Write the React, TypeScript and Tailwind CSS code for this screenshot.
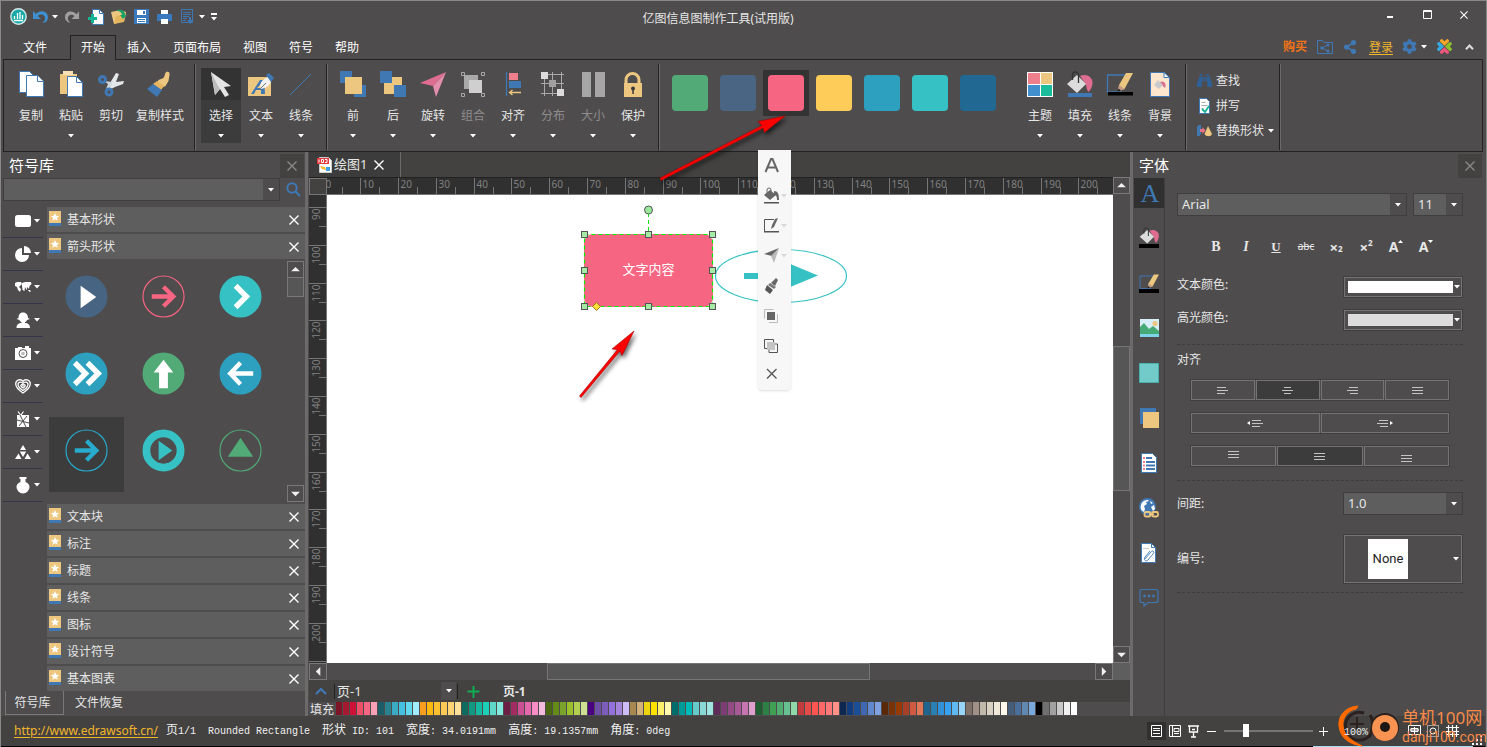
import React from "react";
import { FaBinoculars, FaCog, FaShareAlt } from "react-icons/fa";

const UI_FONT = "font-['Noto_Sans','Noto_Sans_CJK_SC',sans-serif]";

/* ---------- shared pieces ---------- */

function Caret({ className = "text-white" }: { className?: string }) {
  return (
    <svg width="6" height="4" viewBox="0 0 6 4" className={`shrink-0 ${className}`} aria-hidden="true">
      <path d="M0 0h6L3 3.5z" fill="currentColor" />
    </svg>
  );
}

function Cross({ size = 10 }: { size?: number }) {
  return (
    <svg width={size} height={size} viewBox="0 0 10 10" aria-hidden="true">
      <path d="M0.5 0.5l9 9M9.5 0.5l-9 9" stroke="currentColor" strokeWidth="1.4" fill="none" />
    </svg>
  );
}

function Divider() {
  return <div className="mt-1 mr-[5px] ml-[5px] h-[86px] w-0.5 shrink-0 border-r border-l border-r-[#6b696a] border-l-[#222]" />;
}

function Combo({ label, value, className, caretWidth = "w-4" }: { label: string; value: string; className: string; caretWidth?: string }) {
  return (
    <div className={`flex h-[23px] border border-[#403e3f] bg-[#5e5e5e] ${className}`}>
      <div className="relative flex-1">
        <select aria-label={label} className="h-full w-full appearance-none bg-transparent pl-1 text-[13px] text-[#e6e6e6] outline-none">
          <option>{value}</option>
        </select>
      </div>
      <span className={`flex items-center justify-center bg-[#4e4c4d] ${caretWidth}`}>
        <Caret />
      </span>
    </div>
  );
}

/* ---------- ribbon icons ---------- */

const BLUE = "#3f78b3";
const SAND = "#edc77f";

const bucket = (
  <>
    <path d="M14 5c6-3 13 1 12.500 7 0 4-2 7-4 9-2-2-2-6-3-8z" fill="#de6d90" />
    <path d="M11 4L20 13 11 22 1 13z" fill="#dcdcdc" />
    <path d="M6.500 9V4a3 3 0 0 1 6 0v8" fill="none" stroke="#333" strokeWidth="1.300" />
  </>
);

const pencilBox = (
  <>
    <path d="M20 4H1.500v17H16" fill="none" stroke={BLUE} strokeWidth="1.300" />
    <path d="M20 2h7L18.500 18 12 20.500 13 14z" fill={SAND} />
    <path d="M13 14l5.500 4L12 20.500z" fill="#c39a86" />
    <path d="M12.500 17.500l2.500 2-3.500 1.500z" fill="#222" />
  </>
);

const icons: Record<string, React.ReactNode> = {
  copy: (
    <g fill="#fff" stroke={BLUE}>
      <path d="M2.500.500h10l6 6v15h-16z" />
      <path d="M9.500 4.500h11l6 6v15h-17z" />
      <path d="M20.500 4.500v6h6" />
    </g>
  ),
  paste: (
    <>
      <path d="M3 3h17v20H3z" fill={SAND} />
      <path d="M6 0h10v4H6z" fill="#fbdfb5" />
      <path d="M10.500 5.500h9l6 6v14h-15z" fill="#fff" stroke={BLUE} />
      <path d="M19.500 5.500v6h6" fill="none" stroke={BLUE} />
    </>
  ),
  cut: (
    <>
      <path d="M13 12L19 2l3 1-3 8 8-1-1 3-8 3-4 2-3-3z" fill="#e4e7ea" />
      <path d="M7 10l8 1-1 4-3 4-2-1 2-5z" fill="#cfd6dc" />
      <g fill="none" stroke={BLUE} strokeWidth="3">
        <circle cx="5.500" cy="8.500" r="3" />
        <circle cx="12" cy="21" r="3" />
      </g>
    </>
  ),
  brush: (
    <>
      <path d="M20 1c3-1 4 1 3.500 3l-1 6-3 5-2 1-6-5 1-2 5-2c1-1 1-4 2.500-6z" fill={SAND} />
      <path d="M11 10l7 5-3 4-8-6z" fill="#e7b660" />
      <path d="M7 13l9 6-5 7L1 18z" fill={BLUE} />
    </>
  ),
  select: (
    <>
      <path d="M4 1l20 14-7 1 5 8-4 2-5-8-5 6z" fill="#e4e4e4" />
      <path d="M4 1l4 23 5-6-3-5z" fill="#bdbdbd" />
    </>
  ),
  text: (
    <>
      <path d="M1 6h23v19H1z" fill={SAND} />
      <path d="M4 23L13 9h4l1 14h-4v-4h-5l-2 4zM10 17h4v-4z" fill={BLUE} fillRule="evenodd" />
      <path d="M13 14c1-4 4-6 8-8l3 5c-2 4-5 6-10 7z" fill="#f2f2f2" />
      <path d="M12 19l7-7" stroke="#777" />
      <path d="M19 4l3-2 5 5-3 4z" fill={BLUE} />
    </>
  ),
  line: <path d="M3 24L24 3" stroke={BLUE} strokeWidth="1" />,
  front: (
    <>
      <path d="M1 0h12v12H1zM15 14h12v12H15z" fill={BLUE} />
      <path d="M6 6h17v17H6z" fill={SAND} />
    </>
  ),
  back: (
    <>
      <path d="M5 6h18v17H5z" fill={SAND} />
      <path d="M1 0h12v12H1zM15 14h12v12H15z" fill={BLUE} />
    </>
  ),
  rotate: (
    <>
      <path d="M27 1L1 12l13 3z" fill="#de6d90" />
      <path d="M27 1L14 15l3 11z" fill="#e58fae" />
    </>
  ),
  group: (
    <>
      <path d="M5 4h14v14H5z" fill="#a9a9a9" />
      <path d="M10 9h13v13H10z" fill="#cfcfcf" />
      <path d="M2.500 1.500h3v3h-3zM22.500 1.500h3v3h-3zM2.500 22.500h3v3h-3zM22.500 22.500h3v3h-3z" fill="none" stroke="#a9a9a9" />
    </>
  ),
  align: (
    <>
      <path d="M7.500 1v24" stroke={BLUE} strokeWidth="1.200" />
      <path d="M10 2h9v7h-9z" fill="#ee7f8c" />
      <path d="M10 10h12v7H10z" fill={BLUE} />
      <path d="M22 21.500H11M13.500 19l-3 2.500 3 2.500" stroke={SAND} fill="none" strokeWidth="1.300" />
    </>
  ),
  distribute: (
    <>
      <path d="M2 3.500h23M2 12.500h23M2 22.500h23M5.500 1v24M13.500 1v24M22.500 1v24" stroke="#a9a9a9" />
      <path d="M2 1h7v7H2zM18 18h7v7h-7z" fill="#dcdcdc" />
      <path d="M10 9h7v7h-7z" fill="#a0a0a0" />
    </>
  ),
  size: <path d="M3 1h9v25H3zM16 1h10v25H16z" fill="#a6a6a6" />,
  lock: (
    <>
      <path d="M7 12V9a6.500 6.500 0 0 1 13 0v3" fill="none" stroke={SAND} strokeWidth="3" />
      <path d="M5 12h18v14H5z" fill={SAND} />
      <circle cx="14" cy="17.500" r="2" fill="#3b3a3a" />
      <path d="M13.300 18h1.500v5h-1.500z" fill="#3b3a3a" />
    </>
  ),
  theme: (
    <>
      <path d="M1 1h26v25H1z" fill="#fff" />
      <path d="M2 2h12v11H2z" fill="#ee7f8c" />
      <path d="M15 2h11v11H15z" fill={SAND} />
      <path d="M2 14h12v11H2z" fill="#428fcd" />
      <path d="M15 14h11v11H15z" fill="#1abc9c" />
    </>
  ),
  fill: (
    <>
      {bucket}
      <path d="M2 22h24v4H2z" fill={BLUE} />
    </>
  ),
  stroke: (
    <>
      {pencilBox}
      <path d="M2 21h25v3.500H2z" fill="#000" />
    </>
  ),
  background: (
    <>
      <path d="M4.500 1.500h14l5 5v19h-19z" fill="#fde6cd" stroke={BLUE} />
      <path d="M18 1.500v5h5.500z" fill="#fff" stroke={BLUE} />
      <path d="M14 11c4-2 7 2 5 6-2-2-3-3-5-3z" fill="#de6d90" />
      <path d="M12 9l5 5-4 4-5-4z" fill="#c9c9c9" />
    </>
  ),
};

function Icon({ name, size = 28 }: { name: string; size?: number }) {
  return (
    <svg width={size} height={size} viewBox="0 0 28 28" className="shrink-0" aria-hidden="true">
      {icons[name]}
    </svg>
  );
}

function RibbonButton({ icon, label, caret, wide, active, dim }: { icon: string; label: string; caret?: boolean; wide?: boolean; active?: boolean; dim?: boolean }) {
  return (
    <button className={`mt-2 flex h-[75px] shrink-0 flex-col items-center ${wide ? "w-[58px]" : "w-10"} ${active ? "bg-[#3c3c3c]" : ""}`}>
      <span className={`flex h-8 w-full items-start justify-center pt-[3px] ${active ? "bg-[#333]" : ""}`}>
        <Icon name={icon} />
      </span>
      <span className={`mt-2 text-xs leading-4 whitespace-nowrap ${dim ? "text-[#8e8c8d]" : "text-[#e6e6e6]"}`}>{label}</span>
      {caret && <span className="mt-[10px] flex"><Caret /></span>}
    </button>
  );
}

const arrangeButtons = [
  { icon: "front", label: "前" },
  { icon: "back", label: "后" },
  { icon: "rotate", label: "旋转" },
  { icon: "group", label: "组合", dim: true },
  { icon: "align", label: "对齐" },
  { icon: "distribute", label: "分布", dim: true },
  { icon: "size", label: "大小", dim: true },
  { icon: "lock", label: "保护" },
];

const styleSwatches = [
  { color: "bg-[#52ab76]", name: "绿色" },
  { color: "bg-[#4a6583]", name: "灰蓝" },
  { color: "bg-[#f66581]", name: "粉红", active: true },
  { color: "bg-[#fecc59]", name: "黄色" },
  { color: "bg-[#2ca0be]", name: "蓝色" },
  { color: "bg-[#36c2c4]", name: "青色" },
  { color: "bg-[#216892]", name: "深蓝" },
];

function Ribbon() {
  return (
    <section className="mr-0.5 ml-0.5 flex h-[93px] overflow-hidden border border-[#222] pl-[7px]">
      <RibbonButton icon="copy" label="复制" />
      <RibbonButton icon="paste" label="粘贴" caret />
      <RibbonButton icon="cut" label="剪切" />
      <RibbonButton icon="brush" label="复制样式" wide />
      <Divider />
      <RibbonButton icon="select" label="选择" caret active />
      <RibbonButton icon="text" label="文本" caret />
      <RibbonButton icon="line" label="线条" caret />
      <Divider />
      {arrangeButtons.map((b) => (
        <RibbonButton key={b.label} caret {...b} />
      ))}
      <Divider />
      <div className="mt-2.5 mr-[19px] ml-0.5 flex shrink-0 gap-0.5">
        {styleSwatches.map((s) => (
          <button key={s.name} aria-label={s.name} className={`flex size-[46px] items-center justify-center ${s.active ? "bg-[#333]" : ""}`}>
            <span className={`size-9 rounded-[4px] ${s.color}`} />
          </button>
        ))}
      </div>
      <RibbonButton icon="theme" label="主题" caret />
      <RibbonButton icon="fill" label="填充" caret />
      <RibbonButton icon="stroke" label="线条" caret />
      <RibbonButton icon="background" label="背景" caret />
      <Divider />
      <div className="mt-2 ml-[5px] flex shrink-0 flex-col text-xs text-[#e6e6e6]">
        <button className="flex h-[25px] items-center gap-1">
          <FaBinoculars size={15} color="#2f6199" />
          查找
        </button>
        <button className="flex h-[25px] items-center gap-1">
          <svg width="15" height="16" viewBox="0 0 15 16" aria-hidden="true">
            <path d="M2.500.500h7l3 3v12h-10z" fill="#fff" stroke={BLUE} />
            <path d="M4.500 4.500h4M4.500 7.500h6M4.500 10.500h2" stroke="#aaa" />
            <path d="M5 11l3 3 4-6" fill="none" stroke="#16b394" strokeWidth="1.800" />
          </svg>
          拼写
        </button>
        <button className="flex h-[25px] items-center gap-1">
          <svg width="15" height="14" viewBox="0 0 15 14" aria-hidden="true">
            <path d="M0 3l1.500-2H4v9l-1.500 2H0z" fill={BLUE} />
            <path d="M3 5h2.500V3l3 3.500-3 3.500V8H3z" fill="#e57386" />
            <path d="M11 2l4 8c-1 3-6 3-7.500 0z" fill={SAND} />
          </svg>
          替换形状
          <Caret />
        </button>
      </div>
      <Divider />
    </section>
  );
}

/* ---------- title bar and menu ---------- */

function TitleBar() {
  return (
    <header className="flex h-[33px] shrink-0 items-center text-white">
      <div className="flex w-[217px] items-center pb-0.5 pl-[9px]">
        <svg width="17" height="17" viewBox="0 0 17 17" aria-hidden="true">
          <circle cx="8.500" cy="8.500" r="7.700" fill="#1aa9a8" stroke="#d5e9e9" strokeWidth="1.400" />
          <path d="M4.500 11V8M7.500 11V5M10 11V4M12.500 11V7M4 12.500h9" stroke="#fff" strokeWidth="1.300" />
        </svg>
        <button aria-label="撤销" className="ml-[5px]">
          <svg width="16" height="16" viewBox="0 0 16 16"><path d="M1 2v8h8L6 7c3-3 7-1 7 2 0 2-1 4-3 5 4 0 6-3 6-6 0-6-8-8-12-3z" fill="#3d8fd0" /></svg>
        </button>
        <button aria-label="撤销列表" className="ml-1"><Caret /></button>
        <button aria-label="重做" className="ml-[7px]">
          <svg width="15" height="16" viewBox="0 0 16 16"><path d="M15 2v8H7l3-3C7 4 3 6 3 9c0 2 1 4 3 5-4 0-6-3-6-6 0-6 8-8 12-3z" fill="#a0a0a0" /></svg>
        </button>
        <button aria-label="新建" className="ml-2">
          <svg width="16" height="16" viewBox="0 0 16 16">
            <path d="M4.500.500h7l4 4v11h-11z" fill="#fff" stroke={BLUE} />
            <path d="M11.500.500v4h4" fill="none" stroke={BLUE} />
            <path d="M0 8h3V5h3v3h3v3H6v3H3v-3H0z" fill="#16b394" />
          </svg>
        </button>
        <button aria-label="打开" className="ml-[7px]">
          <svg width="16" height="16" viewBox="0 0 16 16">
            <path d="M0 3l5-1 2-1 5 1 3 1-2 9-10 3z" fill={SAND} />
            <path d="M3 15L5 7l10-2-2 8z" fill="#e3b55e" />
            <path d="M6 1c5-1 8 1 8 5h2l-4 4-3-4h2c0-2-2-4-5-4z" fill="#16a06a" />
          </svg>
        </button>
        <button aria-label="保存" className="ml-[7px]">
          <svg width="15" height="15" viewBox="0 0 15 15">
            <path d="M0 0h15v15H0z" fill="#3a79bd" />
            <path d="M3 1h9v5H3zM3 9h9v5H3z" fill="#fff" />
            <path d="M9 2h2v3H9zM4 10h7v1H4zM4 12h7v1H4z" fill="#3a79bd" />
          </svg>
        </button>
        <button aria-label="打印" className="ml-2">
          <svg width="15" height="14" viewBox="0 0 15 14">
            <path d="M0 4h15v7H0z" fill="#3a79bd" />
            <path d="M4 0h7v4H4zM4 9h7v5H4z" fill="#fff" />
          </svg>
        </button>
        <button aria-label="导出" className="ml-[9px]">
          <svg width="12" height="15" viewBox="0 0 12 15">
            <path d="M.500.500h11v13H.500z" fill="none" stroke={BLUE} />
            <path d="M2 3.500h8M2 5.500h8M2 7.500h6M2 9.500h4M2 11.500h3" stroke={BLUE} />
            <path d="M8 8v3H6l3.500 4L12 11h-2V8z" fill={BLUE} />
          </svg>
        </button>
        <button aria-label="导出列表" className="ml-1.5"><Caret /></button>
        <button aria-label="自定义工具栏" className="ml-1.5">
          <svg width="6" height="8" viewBox="0 0 6 8"><path d="M0 0h6v2H0zM0 4h6L3 7.500z" fill="#fff" /></svg>
        </button>
      </div>
      <h1 className="flex-1 pt-0.5 text-center text-xs text-[#e6e6e6]">亿图信息图制作工具(试用版)</h1>
      <div className="flex w-[267px] items-center justify-end gap-7 pr-[17px] pb-1.5">
        <button aria-label="最小化"><svg width="9" height="10" viewBox="0 0 9 10"><path d="M1 6h6v2H1z" fill="#fff" /></svg></button>
        <button aria-label="最大化"><svg width="9" height="9" viewBox="0 0 9 9"><path d="M.500.500h8v8h-8zM.500 1.500h8" fill="none" stroke="#fff" /></svg></button>
        <button aria-label="关闭"><Cross size={8} /></button>
      </div>
    </header>
  );
}

function MenuBar() {
  const menus = ["开始", "插入", "页面布局", "视图", "符号", "帮助"];
  return (
    <nav className="flex h-[25px] shrink-0 items-end text-xs text-white">
      <button className="mr-3 ml-[11px] h-[25px] px-[11px] pt-0.5">文件</button>
      {menus.map((m, i) => (
        <button key={m} className={i === 0 ? "relative z-10 -mb-px h-[25px] border border-b-0 border-[#222] bg-[#4e4c4d] px-2.5" : "h-[25px] px-[11px] pt-0.5"}>
          {m}
        </button>
      ))}
      <div className="ml-auto flex h-[25px] items-center pr-[11px]">
        <button className="mr-2.5 font-bold text-[#f57416]">购买</button>
        <button aria-label="共享文件夹" className="mr-2.5">
          <svg width="16" height="14" viewBox="0 0 16 14">
            <path d="M.500.500h5l1.500 2h8.500v11H.500z" fill="none" stroke={BLUE} />
            <path d="M5 8l6-3M5 8l6 3" stroke={BLUE} />
            <circle cx="5" cy="8" r="1.700" fill={BLUE} /><circle cx="11" cy="5" r="1.600" fill={BLUE} /><circle cx="11" cy="11" r="1.600" fill={BLUE} />
          </svg>
        </button>
        <button aria-label="分享" className="mr-3"><FaShareAlt size={14} color={BLUE} /></button>
        <a href="#login" className="mr-[9px] pt-0.5 text-[#f2b62e] underline underline-offset-2">登录</a>
        <button aria-label="设置" className="mr-1"><FaCog size={15} color={BLUE} /></button>
        <button aria-label="设置列表" className="mr-2.5"><Caret /></button>
        <button aria-label="社区" className="mr-[13px]">
          <svg width="15" height="15" viewBox="0 0 16 16" strokeLinecap="round" strokeWidth="3.600" fill="none">
            <path d="M5 2l3 3 3-3" stroke="#f4a52a" />
            <path d="M14 5l-3 3 3 3" stroke="#8dc02c" />
            <path d="M5 14l3-3 3 3" stroke="#f0557c" />
            <path d="M2 5l3 3-3 3" stroke="#35a9e0" />
          </svg>
        </button>
        <button aria-label="收起功能区">
          <svg width="9" height="6" viewBox="0 0 9 6"><path d="M1 5.200L4.500 1.500 8 5.200" fill="none" stroke="#ddd" strokeWidth="2" /></svg>
        </button>
      </div>
    </nav>
  );
}

/* ---------- symbol library ---------- */

const categoryIcons: { name: string; art: React.ReactNode }[] = [
  { name: "基本", art: <rect x="1" y="3" width="16" height="12" rx="2.500" /> },
  {
    name: "图表",
    art: (
      <>
        <path d="M8 3v7h7a7 7 0 1 1-7-7z" />
        <path d="M10 1a7 7 0 0 1 7 7h-7z" />
      </>
    ),
  },
  { name: "地图", art: <path d="M1 5l2-1 4 0 1 2-2 2-1 1 2 2-1 3-2-2-1-3-2-1zM8 5l3-1 6 0 .5 2-2 2-.5 3-1.500-2-1 3-1.500-3-.5 4-2-1-.5-4zM14 12l2 0 1 2-2-.5z" /> },
  { name: "人物", art: <path d="M9 1.500c3.500 0 5 2.500 5 5.500l2 1-3 1c-.5 1.500-1.500 2-2 2v1c3 0 5 1.500 5 5H2.500c0-3.500 2-5 5-5v-1c-.5 0-1.500-.5-2-2L2.500 8l2-1c0-3 1-5.500 4.500-5.500z" /> },
  {
    name: "照片",
    art: (
      <>
        <path d="M1 4h3V3h4v1h3V2h4v2h2v12H1z" />
        <circle cx="9" cy="9.500" r="4" fill="none" stroke="#4e4c4d" />
        <circle cx="9" cy="9.500" r="1.800" fill="#bbb" />
      </>
    ),
  },
  {
    name: "节日",
    art: (
      <g fill="none" stroke="#fff" strokeWidth="1.300">
        <path d="M9 16C2.500 11.500 1.700 9 1.700 7c0-4.500 5.500-5.500 7.300-2.500C10.800 1.500 16.300 2.500 16.300 7c0 2-.8 4.500-7.300 9z" />
        <path d="M9 13.500C5 11 4 9 4 7.500c0-3 4-3 5-1 1-2 5-2 5 1 0 1.500-1 3.500-5 6z" />
        <path d="M9 11C7 9.500 6.500 8.500 7 8c.8-.8 1.600-.3 2 .5.400-.8 1.200-1.300 2-.5.5.5 0 1.500-2 3z" />
      </g>
    ),
  },
  {
    name: "礼物",
    art: (
      <>
        <path d="M3 5h12v12H3z" />
        <path d="M6.500 5L4 1.500M7 5l2.500-3.500" stroke="#fff" strokeWidth="1.200" />
        <path d="M3 10l12 3M6 5l6 12M13 6l-8 10" stroke="#4e4c4d" />
      </>
    ),
  },
  { name: "三角", art: <path d="M9 2l3 5H6zM4.500 10.500l3 5.500h-6.500zM13.500 10.500l3.500 5.500h-6.500zM5.800 8.500h6.400l-3.200 5.500z" /> },
  { name: "科学", art: <path d="M5.500 1h7v2h-1v3c3 1 4 3 4 5a6.500 6.500 0 0 1-13 0c0-2 1-4 4-5V3h-1z" /> },
];

function StarBadge() {
  return (
    <svg width="12" height="15" viewBox="0 0 12 15" className="mb-0.5 shrink-0" aria-hidden="true">
      <path d="M0 0h12v12H0z" fill={SAND} />
      <path d="M0 12h12v3H0z" fill={BLUE} />
      <path d="M6 2l1.200 2.700 2.900.300-2.200 1.900.700 2.900L6 8.300 3.400 9.800l.700-2.900L1.900 5l2.900-.300z" fill="#fff" />
    </svg>
  );
}

function LibraryRow({ name }: { name: string }) {
  return (
    <div className="flex h-[25px] shrink-0 items-center bg-[#5e5e5e] pr-1.5 pl-0.5 text-[#e6e6e6]">
      <StarBadge />
      <button className="ml-1.5 flex-1 text-left text-xs">{name}</button>
      <button aria-label={`关闭${name}`} className="text-white"><Cross /></button>
    </div>
  );
}

const ARROW_RIGHT = "M10 22h20M22 12l10 10-10 10";

const symbols: { name: string; active?: boolean; art: React.ReactNode }[] = [
  { name: "播放", art: <><circle cx="22" cy="22" r="21.500" fill="#476482" /><path d="M16 11l16 11.500L16 34z" fill="#fff" /></> },
  { name: "右箭头", art: <><circle cx="22" cy="22" r="21" fill="none" stroke="#f66581" strokeWidth="1.200" /><path d={ARROW_RIGHT} fill="none" stroke="#f66581" strokeWidth="4.500" /></> },
  { name: "右尖括号", art: <><circle cx="22" cy="22" r="21.500" fill="#36c2c4" /><path d="M17 11l11 11-11 11" fill="none" stroke="#fff" strokeWidth="5.500" /></> },
  { name: "双右尖括号", art: <><circle cx="22" cy="22" r="21.500" fill="#2ca0be" /><path d="M10 11l11 11-11 11M23 11l11 11-11 11" fill="none" stroke="#fff" strokeWidth="5.500" /></> },
  { name: "上箭头", art: <><circle cx="22" cy="22" r="21.500" fill="#52ab76" /><path d="M22 8l10 13h-5.500v16h-9V21H12z" fill="#fff" /></> },
  { name: "左箭头", art: <><circle cx="22" cy="22" r="21.500" fill="#2ca0be" /><path d="M35 22H13M22 11L11.500 22 22 33" fill="none" stroke="#fff" strokeWidth="4.500" /></> },
  { name: "圆圈右箭头", active: true, art: <><circle cx="22" cy="22" r="21" fill="none" stroke="#27aacb" strokeWidth="1.200" /><path d={ARROW_RIGHT} fill="none" stroke="#27aacb" strokeWidth="4.500" /></> },
  { name: "圆环播放", art: <><circle cx="22" cy="22" r="17.500" fill="none" stroke="#36c2c4" strokeWidth="8" /><path d="M17 12l14 10-14 10z" fill="#36c2c4" /></> },
  { name: "三角", art: <><circle cx="22" cy="22" r="21" fill="none" stroke="#52ab76" strokeWidth="1.200" /><path d="M22 9l13 19.500H9z" fill="#52ab76" /></> },
];

function ScrollButton({ dir }: { dir: "up" | "down" | "left" | "right" }) {
  const shapes = { up: "M0 6l5-5 5 5z", down: "M0 2h10L5 7z", left: "M7 0v10L2 5z", right: "M2 0v10l5-5z" };
  const vertical = dir === "up" || dir === "down";
  return (
    <button aria-label={dir} className={`flex shrink-0 items-center justify-center border border-[#7a7879] ${vertical ? "h-[17px] w-full" : "h-full w-[18px]"}`}>
      <svg width="9" height={vertical ? 7 : 9} viewBox={vertical ? "0 0 10 8" : "0 0 10 10"}>
        <path d={shapes[dir]} fill="#f0f0f0" />
      </svg>
    </button>
  );
}

function PanelHeader({ title }: { title: string }) {
  return (
    <div className="flex h-[26px] shrink-0 items-center justify-between pl-1.5">
      <h2 className="text-[15px] leading-5 text-white">{title}</h2>
      <button aria-label={`关闭${title}`} className="mt-0.5 flex h-6 w-6 items-center justify-center bg-[#434240] text-[#8a8889]"><Cross /></button>
    </div>
  );
}

function LibraryPanel() {
  return (
    <aside className="flex w-[304px] shrink-0 flex-col pl-0.5">
      <div className="pr-px"><PanelHeader title="符号库" /></div>
      <div className="flex h-[23px] shrink-0 items-center">
        <div className="flex h-full w-[277px] border border-[#403e3f] bg-[#5e5e5e]">
          <input aria-label="搜索符号" className="min-w-0 flex-1 bg-transparent px-1 text-xs text-white outline-none" />
          <button aria-label="搜索历史" className="flex w-4 items-center justify-center bg-[#4e4c4d]"><Caret /></button>
        </div>
        <button aria-label="搜索" className="ml-1.5">
          <svg width="15" height="15" viewBox="0 0 15 15"><circle cx="6" cy="6" r="4.700" fill="none" stroke={BLUE} strokeWidth="2" /><path d="M9.500 9.500l4.500 4.500" stroke={BLUE} strokeWidth="2.200" /></svg>
        </button>
      </div>
      <div className="flex min-h-0 flex-1">
        <div className="flex w-10 shrink-0 flex-col pt-1">
          {categoryIcons.map((c) => (
            <button key={c.name} aria-label={c.name} className="flex h-[33px] shrink-0 items-center gap-0.5 border-b border-[#35354a] pl-[11px]">
              <svg width="18" height="18" viewBox="0 0 18 18" fill="#fff">{c.art}</svg>
              <Caret />
            </button>
          ))}
        </div>
        <div className="ml-1 flex min-w-0 flex-1 flex-col gap-0.5 pt-1.5">
          <LibraryRow name="基本形状" />
          <LibraryRow name="箭头形状" />
          <div className="flex min-h-0 flex-1 justify-between">
            <div className="grid grid-cols-[75px_75px_75px] content-start gap-0.5 pt-0.5 pl-0.5">
              {symbols.map((s) => (
                <button key={s.name} aria-label={s.name} className={`flex h-[75px] justify-center pt-3 ${s.active ? "bg-[#3c3c3c]" : ""}`}>
                  <svg width="43" height="43" viewBox="0 0 44 44">{s.art}</svg>
                </button>
              ))}
            </div>
            <div className="mr-px flex w-[17px] flex-col">
              <ScrollButton dir="up" />
              <div className="h-[19px] border border-t-0 border-[#7a7879] bg-[#575656]" />
              <div className="flex-1" />
              <ScrollButton dir="down" />
            </div>
          </div>
          {["文本块", "标注", "标题", "线条", "图标", "设计符号", "基本图表"].map((n) => (
            <LibraryRow key={n} name={n} />
          ))}
        </div>
      </div>
      <div className="flex h-[25px] shrink-0 items-start text-xs text-[#e6e6e6]">
        <button className="ml-0.5 h-6 w-[59px] border border-t-0 border-[#7a7879] pr-1">符号库</button>
        <button className="h-6 px-[11px]">文件恢复</button>
      </div>
    </aside>
  );
}

/* ---------- canvas ---------- */

const MM10 = 37.795;
const RULER_LAST = 20;

function HorizontalRuler() {
  const marks = Array.from({ length: 22 }, (_, i) => i);
  return (
    <svg className="h-full min-w-0 flex-1" aria-hidden="true">
      {marks.map((i) => {
        const x = Math.round(i * MM10 - 4.500) + 0.5;
        return (
          <g key={i}>
            <path d={`M${x} 0v17M${x + 19} 9v8`} stroke="#757575" />
            {i <= RULER_LAST && <text x={x + 2} y="10" fontSize="10" fill="#808080">{i * 10}</text>}
          </g>
        );
      })}
      <path d="M0 16.500h2000" stroke="#757575" />
    </svg>
  );
}

function VerticalRuler() {
  const marks = Array.from({ length: 14 }, (_, i) => i + 8);
  return (
    <svg className="h-full w-[18px] shrink-0 bg-[#303030]" aria-hidden="true">
      {marks.map((i) => {
        const y = Math.round((i - 9) * MM10 + 12) + 0.5;
        return (
          <g key={i}>
            <path d={`M0 ${y}h17M10 ${y + 19}h7`} stroke="#757575" />
            {i > 8 && i <= RULER_LAST && (
              <text fontSize="10" fill="#808080" textAnchor="end" transform={`translate(11 ${y + 1}) rotate(-90)`}>{i * 10}</text>
            )}
          </g>
        );
      })}
      <path d="M17.500 0v2000" stroke="#757575" />
    </svg>
  );
}

const handles = [[257, 39], [321, 39], [385, 39], [257, 75], [385, 75], [257, 111], [321, 111], [385, 111]];

const floatingTools: { name: string; caret?: boolean; art: React.ReactNode }[] = [
  { name: "文字", art: <path d="M2.500 15L8 2h1.500L15 15M5 10.500h7.500" fill="none" stroke="#666" strokeWidth="2" /> },
  { name: "填充", caret: true, art: <><path d="M7 3l6 5-6 5-6-5z" fill="#666" /><path d="M4 6V3a2 2 0 0 1 4 0v4" fill="none" stroke="#666" /><path d="M11 4c4 0 5 3 5 9h-2c0-4-1-5-3-5z" fill="#666" /><path d="M1 15h15v1.500H1z" fill="#555" /></> },
  { name: "边框", caret: true, art: <><path d="M11 2.500H1.500v12" fill="none" stroke="#555" /><path d="M1 14h15v1.500H1z" fill="#555" /><path d="M12 2l3-1-4 9-3 2 1-4z" fill="#666" /></> },
  { name: "旋转", caret: true, art: <><path d="M16 1L1 7l8 2z" fill="#666" /><path d="M16 1L8 9l3 7z" fill="#bbb" /></> },
  { name: "格式刷", art: <><path d="M13 1l2 2-3 6-4-3z" fill="#666" /><path d="M7 6l6 4-2 2-6-4z" fill="#777" /><path d="M4 8l6 5-3 4-5-4z" fill="#555" /></> },
  { name: "置顶", art: <><path d="M1.500 11.500v-9h9M6 15.500h8.500V7" fill="none" stroke="#bbb" /><path d="M4 5h8v8H4z" fill="#666" /></> },
  { name: "置底", art: <><path d="M10.500 5V2.500h-9v9H4M6 13v2.500h8.500V7H12" fill="none" stroke="#555" /><path d="M4 5h8v8H4z" fill="#c4c4c4" /></> },
  { name: "删除", art: <path d="M4 2l9.500 9.500M13.500 2L4 11.500" stroke="#555" strokeWidth="1.300" fill="none" /> },
];

function Canvas() {
  return (
    <div className="relative min-w-0 flex-1 bg-white">
      <svg width="560" height="200" viewBox="0 0 560 200" className="absolute top-0 left-0" aria-hidden="true">
        <ellipse cx="454" cy="81" rx="65.500" ry="26.500" fill="none" stroke="#36c2c4" strokeWidth="1.200" />
        <path d="M417 78h50v6h-50z" fill="#36c2c4" />
        <path d="M456 66l35 14.500L456 95z" fill="#36c2c4" />
        <rect x="257" y="39" width="129" height="73" rx="9" fill="#f66581" />
        <rect x="257.500" y="39.500" width="128" height="72" fill="none" stroke="#00f000" strokeWidth="1.200" strokeDasharray="4 3" />
        <path d="M321.500 18v22" stroke="#17e517" strokeDasharray="4 3" />
        <circle cx="321.500" cy="15" r="4" fill="#9be89b" stroke="#555" />
        {handles.map(([x, y]) => (
          <rect key={`${x}-${y}`} x={x - 2.5} y={y - 2.5} width="6" height="6" fill="#a5eaa5" stroke="#555" />
        ))}
        <path d="M269.500 107.500l4 4-4 4-4-4z" fill="#ffdf3a" stroke="#a07a10" />
      </svg>
      <span className="absolute top-[39px] left-[257px] flex h-[72px] w-[129px] items-center justify-center text-[13px] text-white">文字内容</span>
      <div role="toolbar" aria-label="快捷工具" className="absolute -top-[45px] left-[431px] z-20 flex w-[33px] flex-col rounded-b-sm bg-[#f7f7f7] pt-px shadow-sm">
        {floatingTools.map((t, i) => (
          <button key={t.name} aria-label={t.name} className={`flex items-center pl-[5px] ${i === floatingTools.length - 1 ? "h-[29px]" : "h-[30px]"}`}>
            <svg width="18" height="18" viewBox="0 0 18 18" className="shrink-0">{t.art}</svg>
            {t.caret && <Caret className="text-[#d8d8d8]" />}
          </button>
        ))}
      </div>
    </div>
  );
}

const palette = [
  "#7d1526", "#a51a30", "#cc1236", "#ed4f68", "#f56682", "#f8a0b5",
  "#1b5c66", "#2a8290", "#3baac5", "#44c0e0", "#62d8ee", "#a0ecfc",
  "#f99d1e", "#fcb711", "#fdc12f", "#fcc955", "#fed373", "#fde09a",
  "#0e6b5e", "#129780", "#17b8a2", "#1bcfb8", "#5fd8c8", "#85e8dc",
  "#6d2045", "#a02c62", "#cc4f94", "#e468ac", "#f98cc4", "#f3bbdc",
  "#4b6611", "#648a18", "#7aa32c", "#9cc02c", "#b2cf4f", "#d0e092",
  "#4b0082", "#6d4fa6", "#7c5dbb", "#9370db", "#a484dc", "#cdbcf5",
  "#a98850", "#d2b07a", "#efd410", "#ffe100", "#fff06a", "#fffab0",
  "#006d6c", "#009a98", "#00b8b5", "#66cccb", "#88d8d6", "#a0e4e2",
  "#5e2c58", "#7c3c74", "#944b85", "#a85a97", "#c675b0", "#dda0cc",
  "#1f5c30", "#2d8043", "#3fa055", "#52ab70", "#66c090", "#90d8aa",
  "#c03c3c", "#e34c48", "#ff5550", "#ff6866", "#ff7878", "#ff9088",
  "#0c2850", "#123c80", "#1a4f98", "#4068b0", "#6088cc", "#80a0e0",
  "#582808", "#7a3208", "#983a00", "#a84028", "#d05a40", "#e07858",
  "#206590", "#2a80b0", "#3090d8", "#38a0f0", "#60b8f0", "#98d4f8",
  "#80706a", "#a09088", "#c0b8a8", "#d8d0c0", "#f0e8d8", "#fff8ec",
  "#465c78", "#4a6f9c", "#6088b0", "#78a8dc",
  "#000000", "#707070", "#a0a0a0", "#c8c8c8", "#f0f0f0", "#ffffff",
];

function Workspace() {
  return (
    <main className="flex min-w-0 flex-1 flex-col bg-[#434240]">
      <div className="flex h-[25px] shrink-0 items-center text-[13px] text-[#e6e6e6]">
        <div className="flex h-full w-[92px] items-center border-r border-[#6b696a] bg-[#3c3c3c] pl-2">
          <svg width="15" height="16" viewBox="0 0 15 16" aria-hidden="true">
            <path d="M2.500.500h9l3 3v12h-12z" fill="#fff" stroke="#ccc" />
            <path d="M0 1h12v6H0z" fill="#e0393e" />
            <path d="M2 2.500v3M4.500 2.500h2v3h-2zM8 2.500h2v3H8" stroke="#fff" fill="none" />
            <path d="M3 9l5 1 1 3-4-1z" fill="#f5b62e" />
            <path d="M9 10h4v4H9z" fill="#3d9fe8" />
          </svg>
          <span className="ml-0.5">绘图1</span>
          <button aria-label="关闭绘图1" className="ml-[7px] text-white"><Cross /></button>
        </div>
      </div>
      <div className="flex min-h-0 flex-1">
        <div className="flex min-w-0 flex-1 flex-col">
          <div className="flex h-[18px] shrink-0 border-t border-[#222] bg-[#303030]">
            <div className="w-[18px] shrink-0 border border-[#757575] bg-[#434240]" />
            <HorizontalRuler />
          </div>
          <div className="flex min-h-0 flex-1">
            <VerticalRuler />
            <Canvas />
          </div>
        </div>
        <div className="flex w-[17px] shrink-0 flex-col bg-[#4e4c4d]">
          <ScrollButton dir="up" />
          <div className="grow-[152]" />
          <div className="h-[145px] border border-[#757575] bg-[#575656]" />
          <div className="grow-[156]" />
          <ScrollButton dir="down" />
        </div>
      </div>
      <div className="flex h-[17px] shrink-0 bg-[#4e4c4d]">
        <ScrollButton dir="left" />
        <div className="grow-[220]" />
        <div className="w-[323px] border border-[#757575] bg-[#575656]" />
        <div className="grow-[226]" />
        <ScrollButton dir="right" />
        <div className="w-[17px] bg-[#5e5e5e]" />
      </div>
      <div className="flex h-[22px] shrink-0 items-center text-xs text-[#e6e6e6]">
        <button aria-label="页面列表" className="ml-1.5">
          <svg width="12" height="8" viewBox="0 0 12 8"><path d="M1 7l5-5 5 5" fill="none" stroke={BLUE} strokeWidth="2.200" /></svg>
        </button>
        <div className="ml-[7px] flex h-[15px] w-[124px] items-center border-r border-l border-[#222]">
          <select aria-label="页面" className="h-4 min-w-0 flex-1 appearance-none bg-transparent pl-0.5 text-[13px] leading-4 outline-none">
            <option>页-1</option>
          </select>
          <span className="mr-px flex h-[18px] w-[15px] items-center justify-center bg-[#4e4c4d]"><Caret /></span>
        </div>
        <button aria-label="新增页" className="ml-[9px]">
          <svg width="13" height="13" viewBox="0 0 13 13"><path d="M6.500 1v12M.5 6.500h12" stroke="#0fae54" strokeWidth="2" /></svg>
        </button>
        <button className="ml-[23px] pt-px text-xs font-bold">页-1</button>
      </div>
      <div className="flex h-3.5 shrink-0 bg-[#4e4c4d]">
        <span className="w-[27px] shrink-0 pl-px text-xs leading-4 whitespace-nowrap text-[#e6e6e6]">填充</span>
        <div className="flex h-[13px] gap-px overflow-hidden">
          {palette.map((c, i) => (
            <button key={i} aria-label={c} className="w-1.5 shrink-0" style={{ backgroundColor: c }} />
          ))}
        </div>
      </div>
    </main>
  );
}

/* ---------- format panel ---------- */

const formatTabs: { name: string; art: React.ReactNode }[] = [
  { name: "字体", art: <text x="11" y="19" textAnchor="middle" fontSize="26" fill={BLUE} className="font-['Liberation_Serif',serif]">A</text> },
  { name: "填充", art: <><g transform="translate(0 -1) scale(0.750)">{bucket}</g><path d="M0 16h20v4H0z" fill="#000" /></> },
  { name: "线条", art: <><g transform="scale(0.740)">{pencilBox}</g><path d="M0 16h20v4H0z" fill="#000" /></> },
  { name: "图片", art: <><path d="M1 1h19v18H1z" fill="#d9edf7" /><circle cx="16" cy="5.500" r="2.500" fill={SAND} /><path d="M1 16V9l4-4 5 6 4-3 6 5v3z" fill="#45aa75" /><path d="M1 16h19v3H1z" fill="#7fd3e8" /></> },
  { name: "形状", art: <path d="M.500.500h19v19H.500z" fill="#73cbc9" stroke="#48b0ad" /> },
  { name: "图层", art: <><path d="M1 0h16v16H1z" fill={BLUE} /><path d="M4 4h16v16H4z" fill={SAND} /></> },
  { name: "页面", art: <><path d="M2.500.500h11l4 4v15h-15z" fill="#fff" stroke={BLUE} /><path d="M4 5h2M4 9h2M4 12.500h2M4 16h2" stroke="#ee7f8c" strokeWidth="2" /><path d="M7 5h6M7 9h9M7 12.500h9M7 16h9" stroke={BLUE} strokeWidth="2" /></> },
  { name: "链接", art: <><circle cx="8.500" cy="8.500" r="8.500" fill={BLUE} /><path d="M2 7c1-4 4-5 7-5l1 1-3 1 1 2-3 2 1 3-1 3c-3-1-4-4-3-7zM11 3l3 2-2 1zM12 9l3-2 1 4-2 2z" fill="#fff" /><g fill="none" stroke={SAND} strokeWidth="1.800"><rect x="5.500" y="14" width="6" height="4.500" rx="1.500" /><rect x="13" y="14" width="6" height="4.500" rx="1.500" /><path d="M10 16.300h5" /></g></> },
  { name: "附件", art: <><path d="M2.500.500h10l4 4v15h-14z" fill="#fff" stroke={BLUE} /><path d="M12.500.500v4h4" fill="none" stroke={BLUE} /><path d="M4 5.500h6" stroke="#ccc" /><path d="M6 16l6-7c2-2 4 0 2 2l-5 6c-2 2-5 0-3-3l5-6" fill="none" stroke={BLUE} strokeWidth="0.900" /></> },
  { name: "评论", art: <><path d="M3 1.500h14q2 0 2 2v9q0 2-2 2H9L5 18v-3.500H3q-2 0-2-2v-9q0-2 2-2z" fill="none" stroke={BLUE} strokeWidth="1.200" /><circle cx="5.500" cy="8" r="1.400" fill={BLUE} /><circle cx="10" cy="8" r="1.400" fill={BLUE} /><circle cx="14.500" cy="8" r="1.400" fill={BLUE} /></> },
];

const glyph = "flex h-[30px] w-[30px] items-center justify-center text-[#e6e6e6]";
const lines = {
  left: "M0 .500h9M0 3.500h11M0 6.500h8",
  center: "M2 .500h7M0 3.500h11M2 6.500h7",
  right: "M2 .500h9M0 3.500h11M3 6.500h8",
  full: "M0 .500h11M0 3.500h11M0 6.500h11",
};

function Lines({ kind }: { kind: keyof typeof lines }) {
  return <svg width="11" height="7" viewBox="0 0 11 7" aria-hidden="true"><path d={lines[kind]} stroke="#c4c4c4" /></svg>;
}

function AlignButton({ label, active, offset = "items-center", children }: { label: string; active?: boolean; offset?: string; children: React.ReactNode }) {
  return (
    <button aria-label={label} className={`flex h-5 flex-1 justify-center gap-0.5 border border-[#757374] ${offset} ${active ? "bg-[#3c3c3c]" : ""}`}>
      {children}
    </button>
  );
}

const dash = <div className="border-t border-dashed border-[#3e3c3d]" />;

function ColorPick({ label, swatch }: { label: string; swatch: string }) {
  return (
    <div className="flex h-5 items-center justify-between">
      <span className="-mt-1">{label}:</span>
      <button aria-label={label} className="flex h-5 w-[118px] items-center border border-[#757374] pl-[3px] outline outline-[#403e3f]">
        <span className={`h-3 flex-1 ${swatch}`} />
        <span className="flex w-2 justify-center"><Caret /></span>
      </button>
    </div>
  );
}

function FormatPanel() {
  return (
    <aside className="flex w-[352px] shrink-0 flex-col">
      <div className="pr-[3px]"><PanelHeader title="字体" /></div>
      <div className="flex min-h-0 flex-1">
        <div className="flex w-8 shrink-0 flex-col gap-[15px] border-r border-[#403e3f] pl-px">
          {formatTabs.map((t, i) => (
            <button key={t.name} aria-label={t.name} className={`flex h-[30px] shrink-0 items-center justify-center ${i === 0 ? "bg-[#303030]" : ""}`}>
              <svg width="20" height="20" viewBox="0 0 20 20" className="overflow-visible">{t.art}</svg>
            </button>
          ))}
        </div>
        <div className="flex-1 pt-[15px] pr-[22px] pl-3 text-xs text-[#e6e6e6]">
          <div className="flex justify-between">
            <Combo label="字体" value="Arial" className="w-[230px]" />
            <Combo label="字号" value="11" className="w-[50px]" />
          </div>
          <div className="mt-4 ml-6 flex h-[30px]">
            <button aria-label="加粗" className={`${glyph} font-['Liberation_Serif',serif] text-sm font-bold`}>B</button>
            <button aria-label="斜体" className={`${glyph} font-['Liberation_Serif',serif] text-sm font-bold italic`}>I</button>
            <button aria-label="下划线" className={`${glyph} font-['Liberation_Serif',serif] text-[13px] font-bold underline`}>U</button>
            <button aria-label="删除线" className={`${glyph} text-[10px] line-through`}>abc</button>
            <button aria-label="下标" className={`${glyph} text-[15px] font-bold`}>×<sub className="text-[8px]">2</sub></button>
            <button aria-label="上标" className={`${glyph} text-[15px] font-bold`}>×<sup className="text-[8px]">2</sup></button>
            <button aria-label="增大字号" className={`${glyph} text-sm font-bold`}>
              A<svg width="5" height="14" viewBox="0 0 5 14"><path d="M0 3l2.500-3L5 3z" fill="#fff" /></svg>
            </button>
            <button aria-label="减小字号" className={`${glyph} text-sm font-bold`}>
              A<svg width="5" height="14" viewBox="0 0 5 14"><path d="M0 0h5L2.500 3z" fill="#fff" /></svg>
            </button>
          </div>
          <div className="mt-[15px] mb-3.5 flex flex-col gap-[13px] pr-px">
            <ColorPick label="文本颜色" swatch="bg-white" />
            <ColorPick label="高光颜色" swatch="bg-[#dcdcdc]" />
          </div>
          {dash}
          <h3 className="mt-[7px] leading-4">对齐</h3>
          <div className="mt-3 mr-3.5 mb-3.5 ml-3.5 flex flex-col gap-[13px]">
            <div className="flex gap-px outline outline-[#403e3f]">
              <AlignButton label="左对齐"><Lines kind="left" /></AlignButton>
              <AlignButton label="居中" active><Lines kind="center" /></AlignButton>
              <AlignButton label="右对齐"><Lines kind="right" /></AlignButton>
              <AlignButton label="两端对齐"><Lines kind="full" /></AlignButton>
            </div>
            <div className="flex gap-px outline outline-[#403e3f]">
              <AlignButton label="减少缩进">
                <svg width="3" height="4" viewBox="0 0 3 4"><path d="M3 0v4L0 2z" fill="#fff" /></svg>
                <Lines kind="left" />
              </AlignButton>
              <AlignButton label="增加缩进">
                <Lines kind="right" />
                <svg width="3" height="4" viewBox="0 0 3 4"><path d="M0 0v4l3-2z" fill="#fff" /></svg>
              </AlignButton>
            </div>
            <div className="flex gap-px outline outline-[#403e3f]">
              <AlignButton label="顶端" offset="items-start pt-1"><Lines kind="full" /></AlignButton>
              <AlignButton label="中部" active><Lines kind="full" /></AlignButton>
              <AlignButton label="底端" offset="items-end pb-[3px]"><Lines kind="full" /></AlignButton>
            </div>
          </div>
          {dash}
          <div className="mt-[11px] flex items-center justify-between">
            <span>间距:</span>
            <Combo label="间距" value="1.0" className="w-[120px]" />
          </div>
          <div className="mt-5 mb-[9px] flex items-center justify-between pr-px">
            <span>编号:</span>
            <button aria-label="编号" className="flex h-12 w-[118px] items-center justify-between border border-[#757374] pr-0.5 pl-[23px] outline outline-[#403e3f]">
              <span className="flex size-10 items-center justify-center bg-white font-['Roboto',sans-serif] text-[13px] text-[#222]">None</span>
              <Caret />
            </button>
          </div>
          {dash}
        </div>
      </div>
    </aside>
  );
}

/* ---------- status bar ---------- */

function Mono({ children }: { children: React.ReactNode }) {
  return <span className="font-['Liberation_Mono',monospace] text-[10px] whitespace-pre">{children}</span>;
}

function StatusBar() {
  return (
    <footer className="flex h-[30px] shrink-0 items-center bg-[#434240] text-xs text-[#f0f0f0]">
      <a href="http://www.edrawsoft.cn/" className="ml-[13px] text-[#f2b62e] underline underline-offset-2">http://www.edrawsoft.cn/</a>
      <div className="ml-2 flex items-baseline gap-3 leading-4 whitespace-nowrap">
        <span>页<Mono>1/1</Mono></span>
        <Mono>Rounded Rectangle</Mono>
        <span>形状<Mono> ID: 101</Mono></span>
        <span>宽度<Mono>: 34.0191mm</Mono></span>
        <span>高度<Mono>: 19.1357mm</Mono></span>
        <span>角度<Mono>: 0deg</Mono></span>
      </div>
      <div className="ml-auto flex items-center">
        <button aria-label="普通视图" className="flex h-[18px] w-[19px] items-center justify-center bg-[#303030]">
          <svg width="11" height="12" viewBox="0 0 11 12"><path d="M.500.500h10v11H.500zM2 3.500h7M2 5.500h7M2 8.500h7" fill="none" stroke="#fff" /></svg>
        </button>
        <button aria-label="大纲视图" className="ml-[3px]">
          <svg width="12" height="12" viewBox="0 0 12 12"><path d="M.500.500h11v11H.500zM3.500 0v12M5 3.500h5v3H5zM5 8.500h5" fill="none" stroke="#fff" /></svg>
        </button>
        <button aria-label="演示" className="ml-[7px]">
          <svg width="11" height="13" viewBox="0 0 11 13"><path d="M0 1h11M1.500 1v6h8V1M5.500 7v5M3 12h5M4 4.500h3" fill="none" stroke="#fff" strokeWidth="1.300" /></svg>
        </button>
        <button aria-label="缩小" className="ml-2">
          <svg width="9" height="9" viewBox="0 0 9 9"><path d="M0 4.500h9" stroke="#fff" /></svg>
        </button>
        <input
          type="range"
          aria-label="缩放"
          defaultValue={23}
          className="ml-2 h-[13px] w-[89px] appearance-none bg-transparent [&::-webkit-slider-runnable-track]:h-0.5 [&::-webkit-slider-runnable-track]:bg-[#757575] [&::-webkit-slider-thumb]:-mt-1.5 [&::-webkit-slider-thumb]:h-[13px] [&::-webkit-slider-thumb]:w-1.5 [&::-webkit-slider-thumb]:appearance-none [&::-webkit-slider-thumb]:bg-white"
        />
        <button aria-label="放大" className="ml-1.5">
          <svg width="9" height="9" viewBox="0 0 9 9"><path d="M0 4.500h9M4.500 0v9" stroke="#fff" /></svg>
        </button>
        <span className="relative z-30 ml-4 w-6"><Mono>100%</Mono></span>
        <button aria-label="适合窗口" className="ml-[40px]">
          <svg width="13" height="12" viewBox="0 0 13 12"><path d="M.500.500h12v9H.500zM3 3.500h7v3H3zM6.500 2v8M2 5h9" fill="none" stroke="#fff" /></svg>
        </button>
        <button aria-label="缩放区域" className="ml-1.5">
          <svg width="12" height="12" viewBox="0 0 12 12"><path d="M.500.500h11v11H.500z" fill="none" stroke="#fff" strokeDasharray="1 1" /><circle cx="6" cy="6" r="3" fill="none" stroke="#fff" /></svg>
        </button>
        <button aria-label="网格" className="mr-3 ml-[7px]">
          <svg width="13" height="12" viewBox="0 0 13 12"><path d="M2.500 0v12M6.500 0v12M10.500 0v12M0 2.500h13M0 6.500h13M0 9.500h13" stroke="#fff" strokeWidth="1.200" /></svg>
        </button>
        <svg width="11" height="11" viewBox="0 0 11 11" className="mt-4 mr-[3px]" aria-hidden="true">
          <path d="M9 1h2v2H9zM9 5h2v2H9zM9 9h2v2H9zM5 5h2v2H5zM5 9h2v2H5zM1 9h2v2H1z" fill="#fff" />
        </svg>
      </div>
    </footer>
  );
}

/* ---------- overlays ---------- */

function Pointers() {
  return (
    <svg width="240" height="300" viewBox="570 110 240 300" className="pointer-events-none absolute top-[109px] left-[569px] z-10 drop-shadow-[2px_3px_2px_rgba(0,0,0,0.6)]" aria-hidden="true">
      <g fill="#fe0000" stroke="#a00" strokeWidth="0.600">
        <path d="M660 178l102-52.500-4-4 27-5.500-20.500 16.500-1.500-4.500L661 180.500z" />
        <path d="M579.500 396l38-46.500-5.500-.500 22-18-12 24.500-2-4.500-39 46.500z" />
      </g>
    </svg>
  );
}

function Watermark() {
  return (
    <div className="pointer-events-none absolute -right-px bottom-[3px] z-20 flex h-9 items-center text-[#f98a48]">
      <svg width="64" height="44" viewBox="0 0 64 44" aria-hidden="true">
        <path d="M26 9A14 14 0 1 0 33 30" fill="none" stroke="#2b211e" strokeWidth="3" />
        <path d="M19 13v14M12 20h14" stroke="#2b211e" strokeWidth="2" />
        <path d="M20 2C6 3 0 13 1 22c1 10 8 18 23 20-10-5-18-10-19-20C4 13 11 6 18 5z" fill="#ff6a00" stroke="#ff6a00" />
        <path d="M32 11c4 6 3 16-1 22" fill="none" stroke="#2b211e" strokeWidth="3" />
        <circle cx="47" cy="23" r="14" fill="#2b211e" />
        <circle cx="47" cy="24" r="13" fill="#f99352" />
        <circle cx="47" cy="23" r="5" fill="#1d1716" />
      </svg>
      <div className="flex flex-col">
        <span className="text-[17px] leading-[22px] whitespace-nowrap">单机100网</span>
        <span className="font-['Roboto',sans-serif] text-sm leading-4">danji100.com</span>
      </div>
    </div>
  );
}

export default function App() {
  return (
    <div className={`relative flex h-screen min-h-[700px] flex-col overflow-hidden border-t border-r border-l border-[#8a8889] bg-[#4e4c4d] pr-px ${UI_FONT}`}>
      <TitleBar />
      <MenuBar />
      <Ribbon />
      <div className="flex min-h-0 flex-1">
        <LibraryPanel />
        <div className="mr-px w-[3px] shrink-0 bg-[#6c6a6b]" />
        <Workspace />
        <div className="w-[3px] shrink-0 bg-[#6c6a6b]" />
        <FormatPanel />
      </div>
      <StatusBar />
      <div className="flex h-px shrink-0 justify-end bg-black pr-3">
        <div className="w-40 bg-[#a9d8ea]" />
      </div>
      <Pointers />
      <Watermark />
    </div>
  );
}
